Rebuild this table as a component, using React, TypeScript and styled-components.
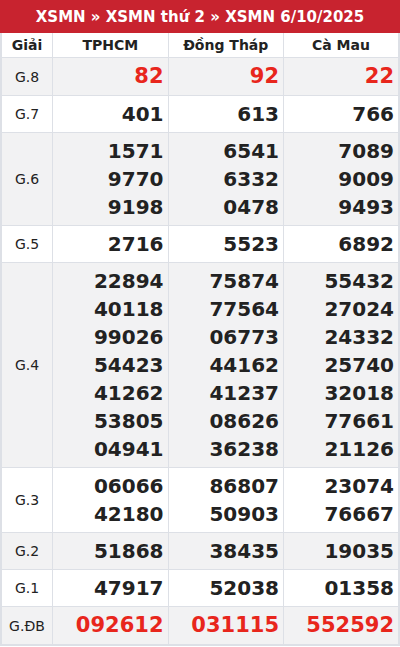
import React from 'react';
import styled, { createGlobalStyle } from 'styled-components';

type Prize = {
  label: string;
  values: string[][];
  highlight?: boolean;
  shaded?: boolean;
};

const provinces = ['TPHCM', 'Đồng Tháp', 'Cà Mau'];

const prizes: Prize[] = [
  { label: 'G.8', values: [['82'], ['92'], ['22']], highlight: true, shaded: true },
  { label: 'G.7', values: [['401'], ['613'], ['766']] },
  {
    label: 'G.6',
    values: [
      ['1571', '9770', '9198'],
      ['6541', '6332', '0478'],
      ['7089', '9009', '9493'],
    ],
    shaded: true,
  },
  { label: 'G.5', values: [['2716'], ['5523'], ['6892']] },
  {
    label: 'G.4',
    values: [
      ['22894', '40118', '99026', '54423', '41262', '53805', '04941'],
      ['75874', '77564', '06773', '44162', '41237', '08626', '36238'],
      ['55432', '27024', '24332', '25740', '32018', '77661', '21126'],
    ],
    shaded: true,
  },
  {
    label: 'G.3',
    values: [
      ['06066', '42180'],
      ['86807', '50903'],
      ['23074', '76667'],
    ],
  },
  { label: 'G.2', values: [['51868'], ['38435'], ['19035']], shaded: true },
  { label: 'G.1', values: [['47917'], ['52038'], ['01358']] },
  { label: 'G.ĐB', values: [['092612'], ['031115'], ['552592']], highlight: true, shaded: true },
];

const GlobalStyle = createGlobalStyle`
  html, body {
    margin: 0;
    padding: 0;
    background: #fff;
  }
  body {
    font-family: 'DejaVu Sans', 'Liberation Sans', sans-serif;
    color: #222;
  }
`;

const Wrapper = styled.div`
  width: 400px;
`;

const Title = styled.div`
  background: #c8232f;
  color: #fff;
  font-weight: bold;
  font-size: 15px;
  height: 33px;
  display: flex;
  align-items: center;
  justify-content: center;
  box-sizing: border-box;
`;

const Table = styled.table`
  width: 100%;
  border-collapse: collapse;
  border: 2px solid #dde0e6;
  border-top: none;
  table-layout: fixed;
`;

const HeadCell = styled.th<{ $w?: number }>`
  width: ${(p) => (p.$w ? `${p.$w}px` : 'auto')};
  font-size: 14px;
  font-weight: bold;
  height: 24px;
  padding: 0;
  border: 1px solid #dde0e6;
  border-top: none;
  background: #fff;
  color: #222;
`;

const Row = styled.tr<{ $shaded?: boolean }>`
  background: ${(p) => (p.$shaded ? '#f2f2f3' : '#fff')};
`;

const Label = styled.td`
  font-size: 14px;
  text-align: center;
  border: 1px solid #dde0e6;
  padding: 0;
  color: #222;
`;

const Cell = styled.td<{ $highlight?: boolean }>`
  border: 1px solid #dde0e6;
  text-align: right;
  padding: 4px 4px 4px 0;
  font-weight: bold;
  font-size: ${(p) => (p.$highlight ? '21px' : '20px')};
  line-height: ${(p) => (p.$highlight ? '29px' : '28px')};
  color: ${(p) => (p.$highlight ? '#e8261c' : '#222')};
`;

const Num = styled.div``;

export default function App() {
  return (
    <Wrapper>
      <GlobalStyle />
      <Title>XSMN » XSMN thứ 2 » XSMN 6/10/2025</Title>
      <Table>
        <thead>
          <tr>
            <HeadCell $w={50}>Giải</HeadCell>
            {provinces.map((p) => (
              <HeadCell key={p}>{p}</HeadCell>
            ))}
          </tr>
        </thead>
        <tbody>
          {prizes.map((prize) => (
            <Row key={prize.label} $shaded={prize.shaded}>
              <Label>{prize.label}</Label>
              {prize.values.map((col, i) => (
                <Cell key={i} $highlight={prize.highlight}>
                  {col.map((n, j) => (
                    <Num key={j}>{n}</Num>
                  ))}
                </Cell>
              ))}
            </Row>
          ))}
        </tbody>
      </Table>
    </Wrapper>
  );
}
